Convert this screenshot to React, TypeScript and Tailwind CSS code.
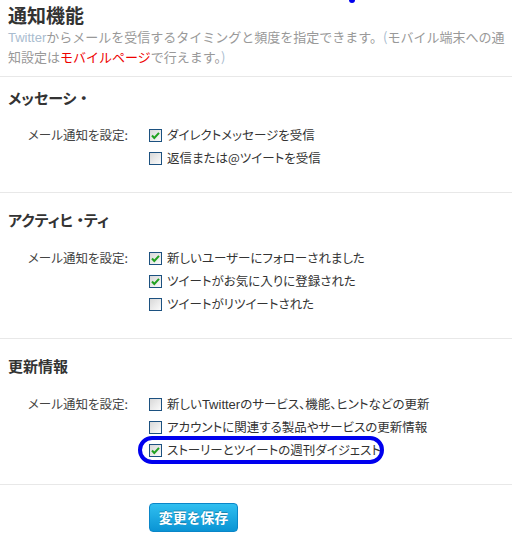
import React from "react";

const font = "font-['Noto_Sans_CJK_JP','Liberation_Sans',sans-serif]";

function Box({ checked }: { checked?: boolean }) {
  return (
    <span className="relative inline-block w-[13px] h-[13px] shrink-0 border border-[#1c5180] bg-[linear-gradient(135deg,#d8d8d8,#fbfbfb)]">
      {checked && (
        <svg viewBox="0 0 11 11" className="absolute left-0 top-0 w-[11px] h-[11px]">
          <path d="M2 5.5 L4.3 8 L9 2.8" fill="none" stroke="#21a121" strokeWidth="2" />
        </svg>
      )}
    </span>
  );
}

function Row({ label, checked, text }: { label?: string; checked?: boolean; text: React.ReactNode }) {
  return (
    <div className="flex items-center h-[23px]">
      <div className="w-[149px] pl-[28px] text-[12.5px] text-[#444] whitespace-nowrap">{label}</div>
      <Box checked={checked} />
      <span className="ml-[5px] text-[12.5px] text-[#333] whitespace-nowrap">{text}</span>
    </div>
  );
}

function Section({
  title,
  pt,
  mt,
  rows,
}: {
  title: React.ReactNode;
  pt: string;
  mt: string;
  rows: { checked?: boolean; text: React.ReactNode }[];
}) {
  return (
    <div className={`${pt} pb-[22px] border-b border-[#e8e8e8]`}>
      <div className="px-2 h-[20px] flex items-center text-[15px] font-bold text-[#333] whitespace-nowrap">{title}</div>
      <div className={mt}>
        {rows.map((r, i) => (
          <Row key={i} label={i === 0 ? "メール通知を設定:" : undefined} checked={r.checked} text={r.text} />
        ))}
      </div>
    </div>
  );
}

export default function App() {
  return (
    <div className={`relative w-[512px] h-[548px] bg-white overflow-hidden ${font} [font-feature-settings:'palt']`}>
      <div className="absolute left-[349px] top-[-3px] w-[6px] h-[6px] rounded-full bg-[#0000ee]" />
      <div className="px-2 pt-[4px] pb-[10px] border-b border-[#e8e8e8]">
        <h1 className="text-[19px] leading-[22px] font-bold text-[#333]">通知機能</h1>
        <p className="mt-[1px] text-[13px] leading-[19px] text-[#999] whitespace-nowrap [font-feature-settings:normal]">
          <span className="text-[#a9bccf] font-['Liberation_Sans',sans-serif]">Twitter</span>からメールを受信するタイミングと頻度を指定できます。
          <span className="text-[#a9bccf]">(</span>モバイル端末への通
          <br />
          知設定は<span className="text-[#ee0000]">モバイルページ</span>で行えます。<span className="text-[#a9bccf]">)</span>
        </p>
      </div>

      <Section
        title="メッセーシ ・"
        pt="pt-[11px]"
        mt="mt-[16px]"
        rows={[
          { checked: true, text: "ダイレクトメッセージを受信" },
          { checked: false, text: "返信または@ツイートを受信" },
        ]}
      />
      <Section
        title="アクティヒ ・ティ"
        pt="pt-[17px]"
        mt="mt-[17px]"
        rows={[
          { checked: true, text: "新しいユーザーにフォローされました" },
          { checked: true, text: "ツイートがお気に入りに登録された" },
          { checked: false, text: "ツイートがリツイートされた" },
        ]}
      />
      <div className="relative">
        <Section
          title="更新情報"
          pt="pt-[17px]"
          mt="mt-[17px]"
          rows={[
            {
              checked: false,
              text: (
                <>
                  新しい<span className="font-['Liberation_Sans',sans-serif] text-[13px]">Twitter</span>のサービス、機能、ヒントなどの更新
                </>
              ),
            },
            { checked: false, text: "アカウントに関連する製品やサービスの更新情報" },
            { checked: true, text: "ストーリーとツイートの週刊ダイジェスト" },
          ]}
        />
        <div className="absolute left-[138px] top-[97px] w-[246px] h-[28px] rounded-full border-4 border-[#0000ee]" />
      </div>

      <div className="pt-[18px] pl-[149px]">
        <button className="w-[89px] h-[29px] rounded-[4px] border border-[#0a86c8] bg-[linear-gradient(#30bff0,#0a94d4)] text-white text-[14px] font-bold [text-shadow:0_-1px_0_rgba(0,0,0,0.25)]">
          変更を保存
        </button>
      </div>
    </div>
  );
}
